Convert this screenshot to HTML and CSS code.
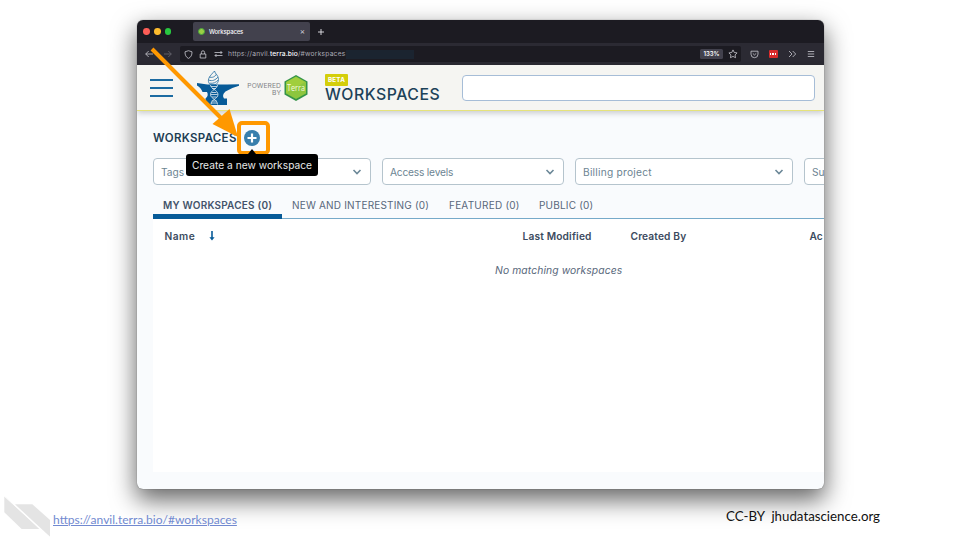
FILE: index.html
```html
<!DOCTYPE html>
<html lang="en">
<head>
<meta charset="utf-8">
<title>Workspaces</title>
<link rel="stylesheet" href="styles.css">
</head>
<body>
<main class="slide">
  <section class="window">
    <div class="tabbar">
      <div class="lights"><i class="red"></i><i class="yellow"></i><i class="green"></i></div>
      <div class="tab"><span class="favicon"></span><span class="tab-title">Workspaces</span><span class="close">×</span></div>
      <svg class="plus" viewBox="0 0 8 8"><path d="M4 1v6M1 4h6"/></svg>
    </div>
    <div class="navbar">
      <svg class="arrow" viewBox="0 0 8 8"><path d="M8 4H.7M3.7 1L.7 4l3 3"/></svg>
      <svg class="arrow dim" viewBox="0 0 8 8"><path d="M0 4h7.3M4.3 1l3 3-3 3"/></svg>
      <div class="urlbar">
        <svg class="shield" viewBox="0 0 9 9"><path d="M4.5.7L8 1.8C8.1 5 7 7.3 4.5 8.4 2 7.3.9 5 1 1.8z"/></svg>
        <svg class="lock" viewBox="0 0 8 9"><path d="M1.2 4h5.6v4H1.2zM2.4 4V2.4a1.6 1.6 0 0 1 3.2 0V4"/></svg>
        <svg class="swap" viewBox="0 0 9 8"><path d="M.5 2.5H8M6.5 1L8 2.5 6.5 4M8.5 5.5H1M2.5 4L1 5.5 2.500 7"/></svg>
        <span class="url">https://anvil.<b>terra.bio</b>/#workspaces</span>
        <span class="url-fill"></span>
        <span class="zoom">133%</span>
        <svg class="star" viewBox="0 0 10 10"><path d="M5 .9l1.250 2.600 2.850.4-2.050 2 .5 2.800L5 7.400 2.450 8.700l.5-2.800-2.050-2 2.850-.4z"/></svg>
      </div>
      <svg class="pocket" viewBox="0 0 9 9"><path d="M1 1.200h7v3a3.500 3.500 0 0 1-7 0zM2.800 3.400l1.700 1.600 1.700-1.600"/></svg>
      <span class="ext"><i></i><i></i><i></i></span>
      <svg class="more" viewBox="0 0 9 8"><path d="M1 1l3 3-3 3M4.700 1l3 3-3 3"/></svg>
      <svg class="menu" viewBox="0 0 8 8"><path d="M.8 1.500h6.400M.8 4h6.400M.8 6.500h6.400"/></svg>
    </div>
    <header class="appbar">
      <div class="burger"><i></i><i></i><i></i></div>
      <svg class="anvil" viewBox="0 0 42 36">
        <path class="body" d="M0 13L10.500 14.500H30L42 14.300V15.800Q34 18 28.500 21.500Q24.500 25 27 28.500H30V35H8.500V28.500Q12 25.500 10 22H5.500Q4 17.500 0 15.500z"/>
        <path class="flame" d="M12 13C10 9 13 6 17.500 1C18 4 21.500 5 21.500 9.500C21.500 12 20 13.500 19 14.500H13z"/>
        <path class="twist" d="M12 7c3 1 6 0 7.500-3M11.500 10c4 1.500 7 0 9.500-3M13 13.200c3 .5 6-.7 8-3"/>
        <path class="helix" d="M13.500 15C13.500 19 21 20 21 24.500S14 29 14 34.500M20.500 15C20.500 19 13.500 20 13.500 24.500S20.500 29 20.500 34.500M14 16.500h6M15 18.500h4M14.500 22.500h5M13.700 24.500h7M15 27h4.500M14.700 31h5M14 33h6"/>
      </svg>
      <div class="powered">POWERED<br>BY</div>
      <svg class="terra" viewBox="0 0 26 28">
        <path d="M13 1L24.500 7.500V20.500L13 27 1.500 20.500V7.500z" fill="#359448"/>
        <path d="M13 2.500L23 8V19.500L13 25 3 19.500V8z" fill="#8cc63e"/>
        <path d="M13 3L22 8 3.500 19V8z" fill="#a0ce3d"/>
        <text x="13" y="16.700" textLength="18" lengthAdjust="spacingAndGlyphs">Terra</text>
      </svg>
      <div class="brand"><span class="beta">BETA</span><span class="brand-name">WORKSPACES</span></div>
      <div class="search"></div>
    </header>
    <div class="content">
      <div class="title-row">
        <h1>WORKSPACES</h1>
        <div class="create">
          <svg viewBox="0 0 16 16"><circle cx="8" cy="8" r="8"/><path d="M8 3.500v9M3.500 8h9"/></svg>
          <span class="highlight"></span>
          <span class="tip">Create a new workspace</span>
        </div>
      </div>
      <div class="filters">
        <div class="select"><span class="f-tags">Tags</span><svg viewBox="0 0 10 8"><path d="M1.500 2L5 5.500 8.500 2"/></svg></div>
        <div class="select"><span class="f-access">Access levels</span><svg viewBox="0 0 10 8"><path d="M1.500 2L5 5.500 8.500 2"/></svg></div>
        <div class="select"><span class="f-billing">Billing project</span><svg viewBox="0 0 10 8"><path d="M1.500 2L5 5.500 8.500 2"/></svg></div>
        <div class="select"><span>Su</span></div>
      </div>
      <nav class="tabs">
        <span class="active">MY WORKSPACES (0)</span>
        <span class="t-new">NEW AND INTERESTING (0)</span>
        <span class="t-feat">FEATURED (0)</span>
        <span class="t-pub">PUBLIC (0)</span>
      </nav>
      <div class="table">
        <div class="thead">
          <span class="c-name">Name <svg viewBox="0 0 6 10"><path d="M3 0v8"/><path class="tip-head" d="M.4 6.300L3 9.500l2.600-3.200z"/></svg></span>
          <span class="c-mod">Last Modified</span>
          <span class="c-by">Created By</span>
          <span class="c-acc">Ac</span>
        </div>
        <div class="empty"><span>No matching workspaces</span></div>
      </div>
    </div>
  </section>
  <svg class="pointer" viewBox="0 0 100 100"><path class="shaft" d="M2 2L76 76"/><path class="head" d="M88 90L62.500 77 79.500 62z"/></svg>
  <footer class="foot">
    <svg class="mark" viewBox="0 0 46 41"><path d="M.3 0V16.300L17.700 33H35.300z"/><path d="M11 8.300H28.300L46 24V40.700z"/><path class="seam" d="M0 0L46 41.500"/></svg>
    <a href="#workspaces">https://anvil.terra.bio/#workspaces</a>
    <span class="credit">CC-BY&nbsp; jhudatascience.org</span>
  </footer>
</main>
</body>
</html>
```
FILE: styles.css
```css
* { box-sizing: border-box; }
body { margin: 0; background: #fff; font-family: Inter, "Open Sans", sans-serif; }
svg { display: block; flex: none; fill: none; }
span { white-space: nowrap; }
.slide { position: relative; width: 960px; height: 540px; padding: 20px 136px 0 137px; overflow: hidden; }
.window {
  width: 686.500px; height: 469px; border-radius: 6px; overflow: hidden; background: #f9fbfd;
  display: flex; flex-direction: column;
  box-shadow: 0 0 1px 0 rgba(0,0,0,.6), 0 10px 24px 1px rgba(0,0,0,.6);
}

.tabbar { height: 23px; background: #1c1b22; display: flex; align-items: center; padding: 0 6px; flex: none; }
.lights { display: flex; gap: 4px; width: 50px; }
.lights i { width: 6.800px; height: 6.800px; border-radius: 50%; }
.red { background: #fe5e57; }
.yellow { background: #fdbc2e; }
.green { background: #28c840; }
.tab { width: 117px; height: 18.500px; border-radius: 2px; background: #42414d; display: flex; align-items: center; padding: 0 5px; color: #fbfbfe; }
.favicon { width: 7px; height: 7px; border-radius: 50%; background: #9bcf45; border: 1.300px solid #48a63c; }
.tab-title { font-size: 6px; letter-spacing: -.16px; margin-left: 4px; flex: 1; font-weight: 500; }
.close { font-size: 8px; line-height: 10px; margin-bottom: 2px; color: #cfcfd8; }
.plus { width: 8px; height: 8px; margin-left: 7px; stroke: #e6e6ec; stroke-width: .9; }

.navbar { height: 22px; background: #2b2a33; display: flex; align-items: center; padding: 0 9px 0 8px; flex: none; stroke: #c9c9d0; stroke-width: .8; }
.arrow { width: 8px; height: 8px; }
.dim { margin-left: 11px; opacity: .4; }
.urlbar { width: 561px; height: 16px; margin-left: 8px; background: #1c1b22; border-radius: 2px; display: flex; align-items: center; padding-left: 4px; }
.shield { width: 9px; height: 9px; }
.lock { width: 8px; height: 9px; margin-left: 6px; }
.swap { width: 9px; height: 8px; margin-left: 7px; }
.url { font-size: 6.700px; color: #a9a9b3; margin-left: 5px; width: 118px; letter-spacing: .21px; }
.url b { color: #fbfbfe; font-weight: 500; letter-spacing: .1px; }
.url-fill { width: 68px; height: 9px; background: #1b2430; }
.zoom { width: 23px; height: 10px; line-height: 10px; margin-left: 286px; border-radius: 1.500px; background: #42414d; color: #fbfbfe; font-size: 6px; font-weight: 600; text-align: center; }
.star { width: 10px; height: 10px; margin-left: 5px; }
.pocket { width: 9px; height: 9px; margin-left: 8.500px; }
.ext { width: 9px; height: 8px; margin-left: 10px; border-radius: 1px; background: #d92b2b; display: flex; gap: 1px; align-items: center; justify-content: center; }
.ext i { width: 1.400px; height: 1.400px; background: #fff; }
.more { width: 9px; height: 8px; margin-left: 10px; }
.menu { width: 8px; height: 8px; margin-left: auto; margin-right: 0; }

.appbar { position: relative; height: 46px; flex: none; background: #f5f5f2; border-bottom: 1.500px solid #e6e37a; box-shadow: 0 2px 6px rgba(0,0,0,.2); display: flex; align-items: flex-start; padding: 5px 8.500px 0 13px; }
.burger { width: 23px; height: 18px; margin-top: 9px; display: flex; flex-direction: column; justify-content: space-between; }
.burger i { height: 2px; background: #1c6ba1; }
.anvil { width: 42px; height: 36px; margin-left: 24px; }
.body { fill: #075b98; }
.flame { fill: #f5f5f2; stroke: #075b98; stroke-width: .7; }
.twist { stroke: #4b87b1; stroke-width: 1; }
.helix { stroke: #e3edf3; stroke-width: .8; }
.powered { width: 34px; margin: 13px 0 0 8px; font-size: 6.700px; line-height: 7px; text-align: right; color: #808285; letter-spacing: .08px; }
.terra { width: 26px; height: 28px; margin: 4px 0 0 2px; }
.terra text { fill: #f4f9df; font: 8.500px "Open Sans", sans-serif; text-anchor: middle; }
.brand { margin: 4px 0 0 16px; width: 137px; display: flex; flex-direction: column; align-items: flex-start; }
.beta { width: 23px; height: 12px; line-height: 12px; border-radius: 1px; background: #d4ce0a; color: #fff; font-size: 6.300px; font-weight: 700; text-align: center; letter-spacing: .2px; }
.brand-name { color: #1c4259; font-size: 15.800px; line-height: 18px; font-weight: 500; letter-spacing: .54px; }
.search { flex: 1; height: 26px; margin-top: 5px; background: #fff; border: 1px solid #a6bdd7; border-radius: 4px; }

.content { flex: 1; padding: 17px 0 17px 16px; display: flex; flex-direction: column; }
.title-row { height: 19px; display: flex; align-items: center; }
h1 { width: 90.500px; margin: 2px 0 0; font-size: 11.500px; line-height: 15px; font-weight: 600; letter-spacing: .3px; color: #1d3e54; }
.create { position: relative; z-index: 2; width: 16px; height: 16px; }
.create svg { width: 16px; height: 16px; }
.create circle { fill: #387fad; }
.create path { stroke: #fff; stroke-width: 2.200; }
.highlight { position: absolute; left: -7px; top: -9px; width: 33px; height: 34px; border: 4px solid #ff9800; border-radius: 5px; }
.tip { position: absolute; left: -57.500px; top: 24.500px; width: 132px; height: 22px; line-height: 22px; border-radius: 3px; background: #000; color: #e8e8e8; font-size: 10.200px; text-align: center; letter-spacing: .03px; }
.tip::before { content: ""; position: absolute; left: 62px; top: -5px; border: 4px solid transparent; border-top: 0; border-bottom: 5px solid #000; }

.filters { height: 27px; margin-top: 11px; display: grid; grid-template-columns: 218px 182px 218px 200px; column-gap: 11px; width: 671px; overflow: hidden; }
.select { border: 1px solid #b5c4cd; border-radius: 4px; background: #fff; padding: 0 8px 0 7px; display: flex; align-items: center; justify-content: space-between; color: #6c8492; font-size: 10.200px; }
.select svg { width: 10px; height: 8px; stroke: #6c8898; stroke-width: 1.600; }
.f-access { letter-spacing: -.2px; }
.f-billing { letter-spacing: .24px; }

.tabs { height: 34px; border-bottom: 1px solid #76aac9; display: flex; flex: none; font-size: 10px; line-height: 40px; color: #58677b; }
.tabs span { height: 34px; }
.active { width: 129px; padding-left: 10px; font-weight: 600; color: #43536a; border-bottom: 5px solid #075b98; letter-spacing: .21px; }
.t-new { width: 157px; padding-left: 10px; letter-spacing: .19px; }
.t-feat { width: 90px; padding-left: 10px; letter-spacing: .23px; }
.t-pub { padding-left: 10px; letter-spacing: .2px; }

.table { flex: 1; background: #fff; overflow: hidden; }
.thead { height: 34px; line-height: 34px; display: flex; padding-left: 11.500px; font-size: 10.200px; font-weight: 600; color: #3b4b60; }
.thead > span { flex: none; }
.c-name { width: 358px; display: flex; align-items: center; letter-spacing: .5px; }
.c-name svg { width: 6px; height: 10px; margin-left: 14px; stroke: #075b98; stroke-width: 1.600; }
.c-name .tip-head { fill: #075b98; stroke: none; }
.c-mod { width: 108px; letter-spacing: .16px; }
.c-by { width: 179px; letter-spacing: .13px; }
.empty { padding-left: 342px; line-height: 34px; font-size: 10.300px; font-style: italic; color: #58677b; letter-spacing: .12px; }

.pointer { position: absolute; left: 150px; top: 47px; width: 100px; height: 100px; }
.shaft { stroke: #ff9800; stroke-width: 4; }
.head { fill: #ff9800; }

.foot { position: absolute; left: 4px; right: 0; top: 496px; height: 42px; display: flex; font-family: Lato, sans-serif; }
.mark { width: 46px; height: 41px; fill: #e4e4e4; }
.mark .seam { stroke: #fff; stroke-width: .8; }
.foot a { width: 184px; margin: 15px 0 0 3px; font-size: 12.050px; line-height: 17px; color: #7189d0; }
.credit { margin: 12px 0 0 489px; font-size: 13.300px; line-height: 17px; color: #111; }
```
